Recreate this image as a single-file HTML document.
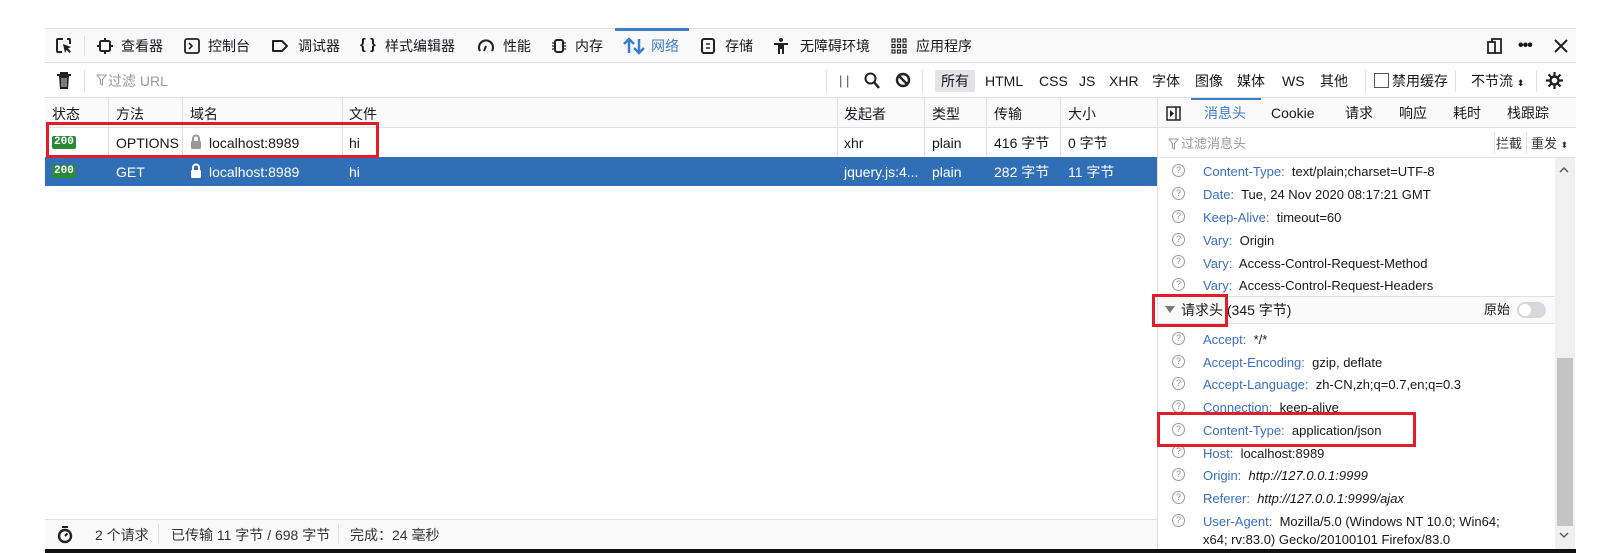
<!DOCTYPE html>
<html><head><meta charset="utf-8"><style>
*{margin:0;padding:0;box-sizing:border-box}
body{width:1611px;height:553px;background:#fff;position:relative;overflow:hidden;font-family:"Liberation Sans","Noto Sans CJK SC",sans-serif;font-size:13px;color:#18181a}
.a{position:absolute;white-space:nowrap}
.ln{position:absolute;background:#e0e0e2}
.t{line-height:16px}
.m{font-size:14px}
.lbl{color:#3a6fc2}
.q{position:absolute;width:13px;height:13px;border:1px solid #9a9a9a;border-radius:50%;font-size:9px;line-height:11px;text-align:center;color:#8a8a8a}
.red{position:absolute;border:3px solid #e21d2b}
.badge{position:absolute;background:#2a8a37;color:#fff;font-family:"Liberation Mono",monospace;font-size:11px;line-height:13px;padding:0 2px;border-radius:2px;font-weight:bold}
</style></head><body>
<!-- top toolbar -->
<div class="a" style="left:45px;top:28px;width:1531px;height:35px;background:#f9f9fa;border-top:1px solid #e0e0e2;border-bottom:1px solid #e0e0e2"></div>
<div class="a" style="left:615px;top:28px;width:74px;height:3px;background:#3f7dc9"></div>
<svg class="a" style="left:55px;top:37px" width="18" height="18" viewBox="0 0 18 18"><path d="M8 2H3a1 1 0 0 0-1 1v11a1 1 0 0 0 1 1h4M12 2h2a1 1 0 0 1 1 1v4" stroke="#222" stroke-width="2" fill="none"/><path d="M8 7l8 3-3 1.5 3 3-1.5 1.5-3-3L10 16z" fill="#222"/></svg>
<div class="ln" style="left:84px;top:36px;width:1px;height:20px"></div>
<svg class="a" style="left:96px;top:37px" width="18" height="18" viewBox="0 0 18 18"><rect x="4" y="4" width="10" height="10" rx="1.5" stroke="#222" stroke-width="2" fill="none"/><path d="M9 1v3M9 14v3M1 9h3M14 9h3" stroke="#222" stroke-width="2"/></svg>
<div class="a t m" style="left:121px;top:38px">查看器</div>
<svg class="a" style="left:183px;top:37px" width="18" height="18" viewBox="0 0 18 18"><rect x="2" y="2" width="14" height="14" rx="2" stroke="#222" stroke-width="1.8" fill="none"/><path d="M6 6l3 3-3 3" stroke="#222" stroke-width="1.6" fill="none"/></svg>
<div class="a t m" style="left:208px;top:38px">控制台</div>
<svg class="a" style="left:270px;top:37px" width="20" height="18" viewBox="0 0 20 18"><path d="M3 4h9l5 5-5 5H3z" stroke="#222" stroke-width="2" fill="none" stroke-linejoin="round"/></svg>
<div class="a t m" style="left:298px;top:38px">调试器</div>
<div class="a t" style="left:360px;top:37px;font-weight:bold;font-size:15px">{ }</div>
<div class="a t m" style="left:385px;top:38px">样式编辑器</div>
<svg class="a" style="left:477px;top:37px" width="18" height="18" viewBox="0 0 18 18"><path d="M3 14A7 7 0 1 1 15 14" stroke="#222" stroke-width="2" fill="none"/><path d="M9 9l-2 5" stroke="#222" stroke-width="2"/></svg>
<div class="a t m" style="left:503px;top:38px">性能</div>
<svg class="a" style="left:550px;top:37px" width="18" height="18" viewBox="0 0 18 18"><rect x="5" y="3" width="8" height="12" rx="2" stroke="#222" stroke-width="2" fill="none"/><path d="M2 6h3M2 9h3M2 12h3M13 6h3M13 9h3M13 12h3" stroke="#222" stroke-width="1.2"/></svg>
<div class="a t m" style="left:575px;top:38px">内存</div>
<svg class="a" style="left:622px;top:37px" width="24" height="18" viewBox="0 0 24 18"><path d="M7 16V3M2 7l5-5 5 5M17 2v13M12 11l5 5 5-5" stroke="#3f7dc9" stroke-width="2.5" fill="none"/></svg>
<div class="a t m" style="left:651px;top:38px;color:#3f7dc9">网络</div>
<svg class="a" style="left:699px;top:37px" width="18" height="18" viewBox="0 0 18 18"><rect x="3" y="2" width="12" height="14" rx="2" stroke="#222" stroke-width="2" fill="none"/><path d="M7 7h4M7 11h4" stroke="#222" stroke-width="1.5"/></svg>
<div class="a t m" style="left:725px;top:38px">存储</div>
<svg class="a" style="left:772px;top:37px" width="18" height="18" viewBox="0 0 18 18"><circle cx="9" cy="3" r="2" fill="#222"/><path d="M2 6h14v2h-4v9h-2v-5H8v5H6V8H2z" fill="#222"/></svg>
<div class="a t m" style="left:800px;top:38px">无障碍环境</div>
<svg class="a" style="left:891px;top:38px" width="16" height="16" viewBox="0 0 16 16"><g fill="none" stroke="#222" stroke-width="1.2"><rect x="1" y="1" width="3" height="3"/><rect x="6.5" y="1" width="3" height="3"/><rect x="12" y="1" width="3" height="3"/><rect x="1" y="6.5" width="3" height="3"/><rect x="6.5" y="6.5" width="3" height="3"/><rect x="12" y="6.5" width="3" height="3"/><rect x="1" y="12" width="3" height="3"/><rect x="6.5" y="12" width="3" height="3"/><rect x="12" y="12" width="3" height="3"/></g></svg>
<div class="a t m" style="left:916px;top:38px">应用程序</div>
<svg class="a" style="left:1486px;top:37px" width="18" height="18" viewBox="0 0 18 18"><rect x="2" y="5" width="7" height="11" stroke="#222" stroke-width="1.8" fill="none"/><path d="M6 5V2h9v14H9" stroke="#222" stroke-width="1.8" fill="none"/></svg>
<div class="a" style="left:1518px;top:37px;font-size:16px;font-weight:bold;letter-spacing:-1px">•••</div>
<svg class="a" style="left:1553px;top:38px" width="16" height="16" viewBox="0 0 16 16"><path d="M2 2l12 12M14 2L2 14" stroke="#222" stroke-width="2"/></svg>

<!-- second toolbar -->
<div class="a" style="left:45px;top:63px;width:1531px;height:35px;background:#fff;border-bottom:1px solid #e0e0e2"></div>
<svg class="a" style="left:56px;top:71px" width="16" height="19" viewBox="0 0 16 19"><path d="M1 4h14M5 4V2h6v2" stroke="#222" stroke-width="2" fill="none"/><path d="M3 5h10l-1 13H4z" fill="#222"/><path d="M6 7v9M8 7v9M10 7v9" stroke="#fff" stroke-width="0.8"/></svg>
<div class="ln" style="left:84px;top:70px;width:1px;height:22px"></div>
<svg class="a" style="left:96px;top:74px" width="11" height="12" viewBox="0 0 11 12"><path d="M1 1h9L6.5 5.5V11L4.5 10V5.5z" fill="none" stroke="#999" stroke-width="1"/></svg>
<div class="a t m" style="left:108px;top:73px;color:#999">过滤 URL</div>
<div class="ln" style="left:826px;top:70px;width:1px;height:22px"></div>
<div class="a t" style="left:839px;top:73px;color:#555">| |</div>
<svg class="a" style="left:864px;top:72px" width="16" height="17" viewBox="0 0 16 17"><circle cx="6.5" cy="6.5" r="5" stroke="#222" stroke-width="2" fill="none"/><path d="M10 10l5 6" stroke="#222" stroke-width="2.4"/></svg>
<svg class="a" style="left:895px;top:72px" width="16" height="16" viewBox="0 0 16 16"><circle cx="8" cy="8" r="6" stroke="#222" stroke-width="2.4" fill="none"/><path d="M4 4l8 8" stroke="#222" stroke-width="2.4"/></svg>
<div class="ln" style="left:922px;top:70px;width:1px;height:22px"></div>
<div class="a" style="left:935px;top:70px;width:40px;height:22px;background:#e3e3e6;border-radius:2px"></div>
<div class="a t m" style="left:941px;top:73px">所有</div>
<div class="a t m" style="left:985px;top:73px">HTML</div>
<div class="a t m" style="left:1039px;top:73px">CSS</div>
<div class="a t m" style="left:1079px;top:73px">JS</div>
<div class="a t m" style="left:1109px;top:73px">XHR</div>
<div class="a t m" style="left:1152px;top:73px">字体</div>
<div class="a t m" style="left:1195px;top:73px">图像</div>
<div class="a t m" style="left:1237px;top:73px">媒体</div>
<div class="a t m" style="left:1282px;top:73px">WS</div>
<div class="a t m" style="left:1320px;top:73px">其他</div>
<div class="ln" style="left:1365px;top:70px;width:1px;height:22px"></div>
<div class="a" style="left:1374px;top:73px;width:15px;height:15px;border:1px solid #555;background:#fff"></div>
<div class="a t m" style="left:1392px;top:73px">禁用缓存</div>
<div class="ln" style="left:1455px;top:70px;width:1px;height:22px"></div>
<div class="a t m" style="left:1471px;top:73px">不节流 <span style="font-size:9px">⬍</span></div>
<div class="ln" style="left:1536px;top:70px;width:1px;height:22px"></div>
<svg class="a" style="left:1545px;top:71px" width="19" height="19" viewBox="0 0 19 19"><circle cx="9.5" cy="9.5" r="4" stroke="#222" stroke-width="2.4" fill="none"/><path d="M9.5 1v4M9.5 14v4M1 9.5h4M14 9.5h4M3.5 3.5l3 3M12.5 12.5l3 3M3.5 15.5l3-3M12.5 6.5l3-3" stroke="#222" stroke-width="2.2"/></svg>

<!-- table header -->
<div class="a" style="left:45px;top:98px;width:1112px;height:30px;background:#f9f9fa;border-bottom:1px solid #e0e0e2"></div>
<div class="ln" style="left:108px;top:98px;width:1px;height:59px"></div>
<div class="ln" style="left:182px;top:98px;width:1px;height:59px"></div>
<div class="ln" style="left:342px;top:98px;width:1px;height:59px"></div>
<div class="ln" style="left:837px;top:98px;width:1px;height:59px"></div>
<div class="ln" style="left:924px;top:98px;width:1px;height:59px"></div>
<div class="ln" style="left:986px;top:98px;width:1px;height:59px"></div>
<div class="ln" style="left:1060px;top:98px;width:1px;height:59px"></div>
<div class="a t m" style="left:52px;top:106px">状态</div>
<div class="a t m" style="left:116px;top:106px">方法</div>
<div class="a t m" style="left:190px;top:106px">域名</div>
<div class="a t m" style="left:349px;top:106px">文件</div>
<div class="a t m" style="left:844px;top:106px">发起者</div>
<div class="a t m" style="left:932px;top:106px">类型</div>
<div class="a t m" style="left:994px;top:106px">传输</div>
<div class="a t m" style="left:1068px;top:106px">大小</div>
<!-- row 1 -->
<div class="badge" style="left:52px;top:136px">200</div>
<div class="a t m" style="left:116px;top:135px">OPTIONS</div>
<svg class="a" style="left:190px;top:134px" width="12" height="15" viewBox="0 0 12 15"><path d="M3 7V4.5a3 3 0 0 1 6 0V7" stroke="#999" stroke-width="2" fill="none"/><rect x="1" y="7" width="10" height="8" rx="1" fill="#999"/></svg>
<div class="a t m" style="left:209px;top:135px">localhost:8989</div>
<div class="a t m" style="left:349px;top:135px">hi</div>
<div class="a t m" style="left:844px;top:135px">xhr</div>
<div class="a t m" style="left:932px;top:135px">plain</div>
<div class="a t m" style="left:994px;top:135px">416 字节</div>
<div class="a t m" style="left:1068px;top:135px">0 字节</div>
<!-- row 2 selected -->
<div class="a" style="left:45px;top:157px;width:1112px;height:29px;background:#306fb5"></div>
<div class="badge" style="left:52px;top:165px">200</div>
<div class="a t m" style="left:116px;top:164px;color:#fff">GET</div>
<svg class="a" style="left:190px;top:163px" width="12" height="15" viewBox="0 0 12 15"><path d="M3 7V4.5a3 3 0 0 1 6 0V7" stroke="#fff" stroke-width="2" fill="none"/><rect x="1" y="7" width="10" height="8" rx="1" fill="#fff"/></svg>
<div class="a t m" style="left:209px;top:164px;color:#fff">localhost:8989</div>
<div class="a t m" style="left:349px;top:164px;color:#fff">hi</div>
<div class="a t m" style="left:844px;top:164px;color:#fff">jquery.js:4...</div>
<div class="a t m" style="left:932px;top:164px;color:#fff">plain</div>
<div class="a t m" style="left:994px;top:164px;color:#fff">282 字节</div>
<div class="a t m" style="left:1068px;top:164px;color:#fff">11 字节</div>
<div class="red" style="left:46px;top:122px;width:333px;height:36px"></div>

<!-- footer -->
<div class="a" style="left:45px;top:519px;width:1112px;height:30px;background:#f9f9fa;border-top:1px solid #e0e0e2"></div>
<svg class="a" style="left:57px;top:525px" width="16" height="19" viewBox="0 0 16 19"><path d="M5 2h6" stroke="#222" stroke-width="2"/><circle cx="8" cy="11" r="6" stroke="#222" stroke-width="2.4" fill="none"/><path d="M8 11l2.5-2.5" stroke="#222" stroke-width="2"/></svg>
<div class="a t m" style="left:95px;top:527px;color:#333">2 个请求</div>
<div class="ln" style="left:158px;top:524px;width:1px;height:20px"></div>
<div class="a t m" style="left:171px;top:527px;color:#333">已传输 11 字节 / 698 字节</div>
<div class="ln" style="left:338px;top:524px;width:1px;height:20px"></div>
<div class="a t m" style="left:350px;top:527px;color:#333">完成：24 毫秒</div>

<!-- sidebar -->
<div class="ln" style="left:1157px;top:98px;width:1px;height:451px"></div>
<div class="a" style="left:1158px;top:98px;width:418px;height:30px;background:#f9f9fa;border-bottom:1px solid #e0e0e2"></div>
<div class="a" style="left:1191px;top:98px;width:70px;height:2px;background:#3f7dc9"></div>
<svg class="a" style="left:1166px;top:106px" width="15" height="15" viewBox="0 0 15 15"><rect x="1" y="1" width="13" height="13" stroke="#222" stroke-width="1.5" fill="none"/><path d="M10 1v13" stroke="#222" stroke-width="1.5"/><path d="M4 4l4 3.5L4 11z" fill="#222"/></svg>
<div class="a t" style="left:1204px;top:105px;color:#3f7dc9;font-size:14px">消息头</div>
<div class="a t" style="left:1271px;top:105px;font-size:14px">Cookie</div>
<div class="a t" style="left:1345px;top:105px;font-size:14px">请求</div>
<div class="a t" style="left:1399px;top:105px;font-size:14px">响应</div>
<div class="a t" style="left:1453px;top:105px;font-size:14px">耗时</div>
<div class="a t" style="left:1507px;top:105px;font-size:14px">栈跟踪</div>
<div class="a" style="left:1158px;top:128px;width:418px;height:30px;border-bottom:1px solid #e0e0e2"></div>
<svg class="a" style="left:1168px;top:138px" width="11" height="12" viewBox="0 0 11 12"><path d="M1 1h9L6.5 5.5V11L4.5 10V5.5z" fill="none" stroke="#999" stroke-width="1"/></svg>
<div class="a t" style="left:1181px;top:136px;color:#999">过滤消息头</div>
<div class="ln" style="left:1494px;top:132px;width:1px;height:22px"></div>
<div class="a t" style="left:1496px;top:136px;color:#333">拦截</div>
<div class="ln" style="left:1526px;top:132px;width:1px;height:22px"></div>
<div class="a t" style="left:1531px;top:136px;color:#333">重发 <span style="font-size:9px">⬍</span></div>
<!-- scrollbar -->
<div class="a" style="left:1555px;top:158px;width:20px;height:391px;background:#f0f0f0"></div>
<div class="a" style="left:1557px;top:358px;width:16px;height:168px;background:#c4c4c4"></div>
<svg class="a" style="left:1559px;top:166px" width="10" height="7" viewBox="0 0 10 7"><path d="M1 6l4-4 4 4" stroke="#555" stroke-width="1.4" fill="none"/></svg>
<svg class="a" style="left:1559px;top:532px" width="10" height="7" viewBox="0 0 10 7"><path d="M1 1l4 4 4-4" stroke="#555" stroke-width="1.4" fill="none"/></svg>

<!-- response headers -->
<div class="q" style="left:1172px;top:164px">?</div><div class="a t" style="left:1203px;top:164px"><span class="lbl">Content-Type:</span>&nbsp; text/plain;charset=UTF-8</div>
<div class="q" style="left:1172px;top:187px">?</div><div class="a t" style="left:1203px;top:187px"><span class="lbl">Date:</span>&nbsp; Tue, 24 Nov 2020 08:17:21 GMT</div>
<div class="q" style="left:1172px;top:210px">?</div><div class="a t" style="left:1203px;top:210px"><span class="lbl">Keep-Alive:</span>&nbsp; timeout=60</div>
<div class="q" style="left:1172px;top:233px">?</div><div class="a t" style="left:1203px;top:233px"><span class="lbl">Vary:</span>&nbsp; Origin</div>
<div class="q" style="left:1172px;top:255px">?</div><div class="a t" style="left:1203px;top:256px"><span class="lbl">Vary:</span>&nbsp; Access-Control-Request-Method</div>
<div class="q" style="left:1172px;top:278px">?</div><div class="a t" style="left:1203px;top:278px"><span class="lbl">Vary:</span>&nbsp; Access-Control-Request-Headers</div>
<!-- request header section -->
<div class="a" style="left:1158px;top:296px;width:397px;height:28px;border-top:1px solid #e0e0e2;border-bottom:1px solid #e0e0e2;background:#fafafa"></div>
<svg class="a" style="left:1165px;top:306px" width="10" height="7" viewBox="0 0 10 7"><path d="M0 0h10L5 7z" fill="#777"/></svg>
<div class="a t" style="left:1181px;top:302px;font-size:14px">请求头 (345 字节)</div>
<div class="a t" style="left:1484px;top:302px">原始</div>
<div class="a" style="left:1517px;top:302px;width:29px;height:16px;border-radius:8px;background:#d8d8db"></div>
<div class="a" style="left:1519px;top:304px;width:12px;height:12px;border-radius:50%;background:#fff"></div>
<div class="red" style="left:1152px;top:294px;width:76px;height:33px"></div>

<div class="q" style="left:1172px;top:332px">?</div><div class="a t" style="left:1203px;top:332px"><span class="lbl">Accept:</span>&nbsp; */*</div>
<div class="q" style="left:1172px;top:355px">?</div><div class="a t" style="left:1203px;top:355px"><span class="lbl">Accept-Encoding:</span>&nbsp; gzip, deflate</div>
<div class="q" style="left:1172px;top:377px">?</div><div class="a t" style="left:1203px;top:377px"><span class="lbl">Accept-Language:</span>&nbsp; zh-CN,zh;q=0.7,en;q=0.3</div>
<div class="q" style="left:1172px;top:400px">?</div><div class="a t" style="left:1203px;top:400px"><span class="lbl">Connection:</span>&nbsp; keep-alive</div>
<div class="q" style="left:1172px;top:423px">?</div><div class="a t" style="left:1203px;top:423px"><span class="lbl">Content-Type:</span>&nbsp; application/json</div>
<div class="q" style="left:1172px;top:445px">?</div><div class="a t" style="left:1203px;top:446px"><span class="lbl">Host:</span>&nbsp; localhost:8989</div>
<div class="red" style="left:1157px;top:412px;width:259px;height:35px"></div>
<div class="q" style="left:1172px;top:468px">?</div><div class="a t" style="left:1203px;top:468px"><span class="lbl">Origin:</span>&nbsp; <i>http://127.0.0.1:9999</i></div>
<div class="q" style="left:1172px;top:491px">?</div><div class="a t" style="left:1203px;top:491px"><span class="lbl">Referer:</span>&nbsp; <i>http://127.0.0.1:9999/ajax</i></div>
<div class="q" style="left:1172px;top:514px">?</div><div class="a t" style="left:1203px;top:514px"><span class="lbl">User-Agent:</span>&nbsp; Mozilla/5.0 (Windows NT 10.0; Win64;</div>
<div class="a t" style="left:1203px;top:532px">x64; rv:83.0) Gecko/20100101 Firefox/83.0</div>
<div class="a" style="left:45px;top:549px;width:1531px;height:4px;background:#111"></div>
</body></html>
